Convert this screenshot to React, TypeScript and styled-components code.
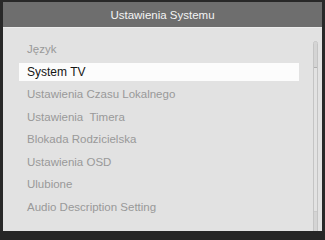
import styled, { createGlobalStyle } from "styled-components";

const GlobalStyle = createGlobalStyle`
    html, body { margin: 0; padding: 0; background: #262626; }
    body { width: 325px; height: 231px; overflow: hidden; font-family: "Liberation Sans", Arial, sans-serif; }
`

const Screen = styled.div`
    width: 325px; height: 231px;
    padding: 2px 3px 4px 3px; box-sizing: border-box;
    background: #282828;
`
const Panel = styled.div`
    display: flex; flex-direction: column;
    height: 100%;
`
const Header = styled.div`
    height: 25px; flex: none;
    display: flex; align-items: center; justify-content: center;
    background: #6e6e6e;
    color: #f4f4f4; font-size: 11.5px;
    padding-top: 1px; box-sizing: border-box;
`
const Body = styled.div`
    flex: 1; display: flex;
    background: #e2e2e2;
    border-top: 1px solid #ececec;
    padding: 10px 4px 0 16px;
`
const List = styled.ul`
    flex: 1; margin: 0; padding: 0; list-style: none;
    padding-right: 14px;
`
const Item = styled.li<{ $selected?: boolean }>`
    height: 22.5px; display: flex; align-items: center;
    white-space: pre;
    & > span {
        display: flex; align-items: center;
        width: 100%; height: 18px; padding-left: 8px;
        background: ${props => props.$selected ? "#fcfcfc" : "transparent"};
        color: ${props => props.$selected ? "#151515" : "#999999"};
        font-size: ${props => props.$selected ? "12px" : "11.5px"};
    }
`
const Track = styled.div`
    width: 5px; margin-top: 3px; height: 194px; flex: none;
    box-sizing: border-box;
    border: 1px solid #c4c4c4; border-radius: 3px;
    display: flex; flex-direction: column; justify-content: space-between;
`
const Thumb = styled.div<{ $end?: boolean }>`
    height: ${props => props.$end ? "22px" : "25px"};
    background: #d4d4d4;
    border-radius: ${props => props.$end ? "0 0 2px 2px" : "2px 2px 0 0"};
    ${props => props.$end ? "border-top: 1px solid #cbcbcb;" : "border-bottom: 1px solid #b0b0b0;"}
`

const items = [
    "Język",
    "System TV",
    "Ustawienia Czasu Lokalnego",
    "Ustawienia  Timera",
    "Blokada Rodzicielska",
    "Ustawienia OSD",
    "Ulubione",
    "Audio Description Setting",
]

export default function App() {
    const selected = 1
    return (
        <>
            <GlobalStyle />
            <Screen>
                <Panel>
                    <Header>Ustawienia Systemu</Header>
                    <Body>
                        <List>
                            {items.map((label, i) => (
                                <Item key={label} $selected={i === selected}><span>{label}</span></Item>
                            ))}
                        </List>
                        <Track><Thumb /><Thumb $end /></Track>
                    </Body>
                </Panel>
            </Screen>
        </>
    )
}
